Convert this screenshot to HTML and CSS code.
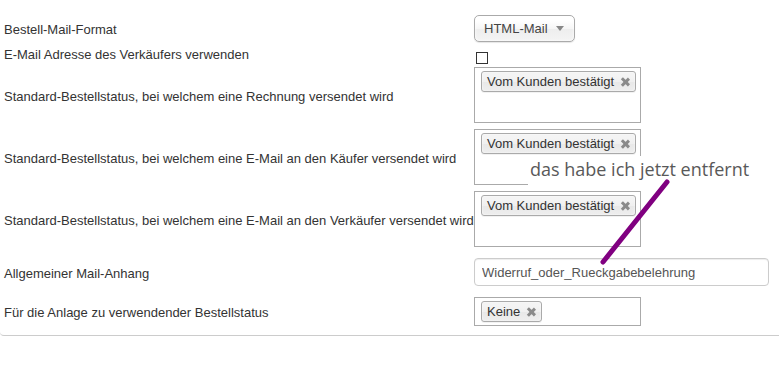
FILE: index.html
```html
<!DOCTYPE html>
<html lang="de">
<head>
  <meta charset="UTF-8">
  <title>Bestell-Mail Einstellungen</title>
  <link rel="stylesheet" href="styles.css">
</head>
<body>
  <div class="panel">
    <div class="row r-first">
      <span class="label">Bestell-Mail-Format</span>
      <div class="select">
        <span>HTML-Mail</span>
        <b class="arrow"></b>
      </div>
    </div>

    <div class="row r-check">
      <span class="label">E-Mail Adresse des Verkäufers verwenden</span>
      <input type="checkbox" class="check">
    </div>

    <div class="row r-near">
      <span class="label">Standard-Bestellstatus, bei welchem eine Rechnung versendet wird</span>
      <ul class="choices tall">
        <li class="choice">Vom Kunden bestätigt <i class="close"></i></li>
      </ul>
    </div>

    <div class="row">
      <span class="label">Standard-Bestellstatus, bei welchem eine E-Mail an den Käufer versendet wird</span>
      <ul class="choices tall">
        <li class="choice">Vom Kunden bestätigt <i class="close"></i></li>
      </ul>
    </div>

    <div class="row">
      <span class="label">Standard-Bestellstatus, bei welchem eine E-Mail an den Verkäufer versendet wird</span>
      <ul class="choices tall">
        <li class="choice">Vom Kunden bestätigt <i class="close"></i></li>
      </ul>
    </div>

    <div class="row r-wide">
      <span class="label">Allgemeiner Mail-Anhang</span>
      <input type="text" class="textfield" value="Widerruf_oder_Rueckgabebelehrung">
    </div>

    <div class="row r-wide">
      <span class="label">Für die Anlage zu verwendender Bestellstatus</span>
      <ul class="choices">
        <li class="choice">Keine <i class="close"></i></li>
      </ul>
    </div>
  </div>

  <!-- annotation drawn on top of the screenshot -->
  <div class="note">das habe ich jetzt entfernt</div>
  <svg class="pointer" width="779" height="376" viewBox="0 0 779 376">
    <line x1="667" y1="182" x2="603" y2="262" stroke="#800080" stroke-width="5" stroke-linecap="round"/>
  </svg>
</body>
</html>
```

FILE: styles.css
```css
* {
  box-sizing: border-box;
}

body {
  margin: 0;
  font-family: "Liberation Sans", Arial, sans-serif;
  font-size: 13px;
  color: #333;
  background-color: #fff;
}

.panel {
  padding: 15px 4px 9px;
  border-bottom: 1px solid #ccc;
  border-bottom-left-radius: 4px;
}

.row {
  display: flex;
  align-items: center;
  margin-top: 6px;
}

.r-first {
  margin-top: 0;
}

.r-check {
  margin-top: 5px;
  align-items: flex-start;
}

.r-near {
  margin-top: 3px;
}

.r-wide {
  margin-top: 11px;
}

.label {
  flex: 0 0 470px;
  white-space: nowrap;
  line-height: 16px;
  padding-top: 3px;
}

.r-check .label {
  padding-top: 0;
}

.select {
  display: flex;
  align-items: center;
  justify-content: space-between;
  width: 101px;
  height: 27px;
  padding: 0 10px 0 9px;
  border: 1px solid #aaa;
  border-radius: 5px;
  background: linear-gradient(#fff 20%, #f6f6f6 50%, #eee 52%, #f4f4f4);
  box-shadow: 0 0 3px #fff inset, 0 1px 1px rgba(0, 0, 0, 0.1);
  color: #444;
}

.arrow {
  width: 0;
  height: 0;
  border-left: 4px solid transparent;
  border-right: 4px solid transparent;
  border-top: 5px solid #888;
}

.check {
  appearance: none;
  width: 12px;
  height: 12px;
  margin: 5px 0 0 2px;
  border: 1px solid #333;
  background: #fff;
}

.choices {
  display: flex;
  align-items: flex-start;
  width: 167px;
  height: 29px;
  margin: 0;
  padding: 3px 6px;
  list-style: none;
  border: 1px solid #aaa;
  background: #fff;
}

.choices.tall {
  height: 56px;
}

.choice {
  display: flex;
  align-items: center;
  height: 21px;
  padding: 0 5px;
  border: 1px solid #aaa;
  border-radius: 3px;
  background: linear-gradient(#f4f4f4 20%, #f0f0f0 50%, #e8e8e8 52%, #eee);
  box-shadow: 0 0 2px #fff inset, 0 1px 0 rgba(0, 0, 0, 0.05);
  color: #333;
  white-space: nowrap;
}

.close {
  position: relative;
  width: 10px;
  height: 10px;
  margin-left: 6px;
}

.close::before,
.close::after {
  content: "";
  position: absolute;
  left: 4px;
  top: 0;
  width: 2.5px;
  height: 10px;
  background: #8a8a8a;
  transform: rotate(45deg);
}

.close::after {
  transform: rotate(-45deg);
}

.textfield {
  width: 295px;
  height: 28px;
  padding: 4px 7px;
  border: 1px solid #ccc;
  border-radius: 4px;
  box-shadow: inset 0 1px 1px rgba(0, 0, 0, 0.075);
  font-family: inherit;
  font-size: 13px;
  color: #555;
}

.note {
  position: absolute;
  left: 528px;
  top: 156px;
  width: 230px;
  height: 30px;
  padding-left: 2px;
  background: #fff;
  font-family: "Open Sans", sans-serif;
  font-size: 18px;
  line-height: 26px;
  color: #595959;
}

.pointer {
  position: absolute;
  left: 0;
  top: 0;
  pointer-events: none;
}
```
